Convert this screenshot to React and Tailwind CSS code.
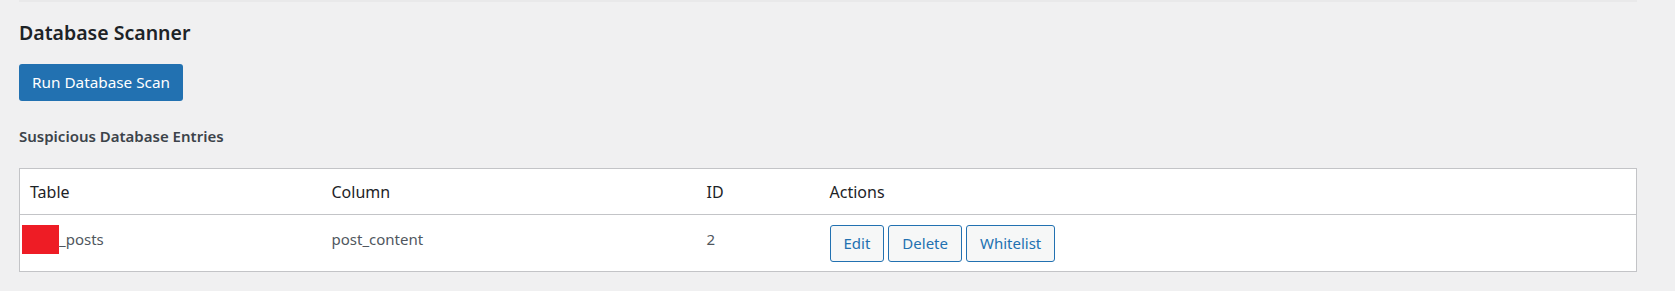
export default function App() {
  const font = { fontFamily: '"Noto Sans", "Open Sans", sans-serif' };
  return (
    <div className="min-h-[291px] w-full bg-[#f0f0f1] pl-[19px] pr-[38px] text-[#3c434a]" style={font}>
      <div className="h-[2px] w-full bg-[#e9e9ea]" />
      <h2 className="mt-[17px] text-[19.5px] leading-[28px] font-semibold text-[#1d2327]">Database Scanner</h2>
      <button className="mt-[17px] h-[37px] rounded-[3px] bg-[#2271b1] px-[13px] text-[15.3px] text-white">
        Run Database Scan
      </button>
      <h3 className="mt-[25px] text-[15px] leading-[20px] font-semibold text-[#3c434a]">Suspicious Database Entries</h3>
      <table className="mt-[22px] w-full table-fixed border border-[#c3c4c7] bg-white text-left">
        <colgroup>
          <col className="w-[302px]" />
          <col className="w-[375px]" />
          <col className="w-[123px]" />
          <col />
        </colgroup>
        <thead>
          <tr className="h-[46px] border-b border-[#c3c4c7]">
            <th className="px-[10px] text-[16px] font-normal text-[#1d2327]">Table</th>
            <th className="px-[10px] text-[16px] font-normal text-[#1d2327]">Column</th>
            <th className="px-[10px] text-[16px] font-normal text-[#1d2327]">ID</th>
            <th className="px-[10px] text-[16px] font-normal text-[#1d2327]">Actions</th>
          </tr>
        </thead>
        <tbody>
          <tr className="h-[57px] align-top text-[15px] text-[#50575e]">
            <td className="pl-[2px] pt-[10px]">
              <span className="flex items-start">
                <span className="h-[29px] w-[37px] bg-[#ee1c25]" />
                <span className="pt-[3px]">_posts</span>
              </span>
            </td>
            <td className="px-[10px] pt-[13px]">post_content</td>
            <td className="px-[10px] pt-[13px]">2</td>
            <td className="px-[10px] pt-[10px]">
              <div className="flex gap-[4px]">
                {["Edit", "Delete", "Whitelist"].map((t) => (
                  <button
                    key={t}
                    className="h-[37px] rounded-[3px] border border-[#2271b1] bg-[#f6f7f7] px-[13px] text-[15px] text-[#2271b1]"
                  >
                    {t}
                  </button>
                ))}
              </div>
            </td>
          </tr>
        </tbody>
      </table>
    </div>
  );
}
